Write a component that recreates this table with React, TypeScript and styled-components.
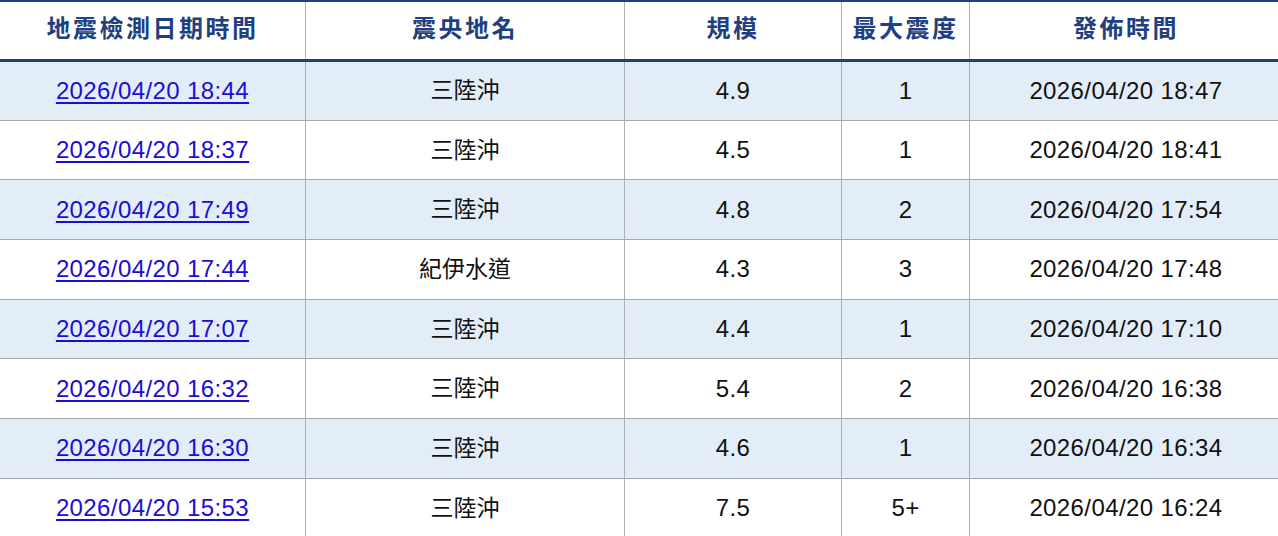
import React from "react";
import styled, { createGlobalStyle } from "styled-components";

const Global = createGlobalStyle`
  html, body { margin: 0; padding: 0; background: #ffffff; }
  body { font-family: "Liberation Sans", "Noto Sans CJK TC", Arial, sans-serif; }
`;

const Table = styled.table`
  width: 1278px;
  border-collapse: collapse;
  table-layout: fixed;
  border-top: 2px solid #1e3f80;
`;

const HeadCell = styled.th<{ $w: number }>`
  width: ${(p) => p.$w}px;
  height: 49px;
  padding: 0 0 8px 0;
  text-align: center;
  vertical-align: middle;
  font-family: "Noto Sans CJK TC", "Liberation Sans", sans-serif;
  font-weight: 700;
  font-size: 24px;
  line-height: 30px;
  letter-spacing: 2.5px;
  color: #1e3f80;
  border-bottom: 3px solid #1e3f80;
  border-left: 1px solid #b0b0b0;
  &:first-child { border-left: none; }
`;

const Row = styled.tr<{ $alt: boolean }>`
  height: 59.7px;
  background: ${(p) => (p.$alt ? "#e3edf7" : "#ffffff")};
  border-bottom: 1px solid #a8a8a8;
`;

const Cell = styled.td`
  padding: 0;
  text-align: center;
  vertical-align: middle;
  font-size: 24px;
  letter-spacing: 0.4px;
  color: #111111;
  border-left: 1px solid #b0b0b0;
  &:first-child { border-left: none; }
`;

const Place = styled(Cell)`
  font-family: "Noto Sans CJK TC", "Liberation Sans", sans-serif;
  font-size: 23px;
  line-height: 28px;
  letter-spacing: 0;
  padding-bottom: 5px;
`;

const Link = styled.a`
  color: #1a0dd6;
  text-decoration: underline;
  text-underline-offset: 3px;
`;

const rows = [
  ["2026/04/20 18:44", "三陸沖", "4.9", "1", "2026/04/20 18:47"],
  ["2026/04/20 18:37", "三陸沖", "4.5", "1", "2026/04/20 18:41"],
  ["2026/04/20 17:49", "三陸沖", "4.8", "2", "2026/04/20 17:54"],
  ["2026/04/20 17:44", "紀伊水道", "4.3", "3", "2026/04/20 17:48"],
  ["2026/04/20 17:07", "三陸沖", "4.4", "1", "2026/04/20 17:10"],
  ["2026/04/20 16:32", "三陸沖", "5.4", "2", "2026/04/20 16:38"],
  ["2026/04/20 16:30", "三陸沖", "4.6", "1", "2026/04/20 16:34"],
  ["2026/04/20 15:53", "三陸沖", "7.5", "5+", "2026/04/20 16:24"],
];

const heads: [string, number][] = [
  ["地震檢測日期時間", 305],
  ["震央地名", 318],
  ["規模", 216],
  ["最大震度", 127],
  ["發佈時間", 312],
];

export default function App() {
  return (
    <>
      <Global />
      <Table>
        <thead>
          <tr>
            {heads.map(([h, w]) => (
              <HeadCell key={h} $w={w}>{h}</HeadCell>
            ))}
          </tr>
        </thead>
        <tbody>
          {rows.map((r, i) => (
            <Row key={i} $alt={i % 2 === 0}>
              <Cell><Link href="#">{r[0]}</Link></Cell>
              <Place>{r[1]}</Place>
              <Cell>{r[2]}</Cell>
              <Cell>{r[3]}</Cell>
              <Cell>{r[4]}</Cell>
            </Row>
          ))}
        </tbody>
      </Table>
    </>
  );
}
